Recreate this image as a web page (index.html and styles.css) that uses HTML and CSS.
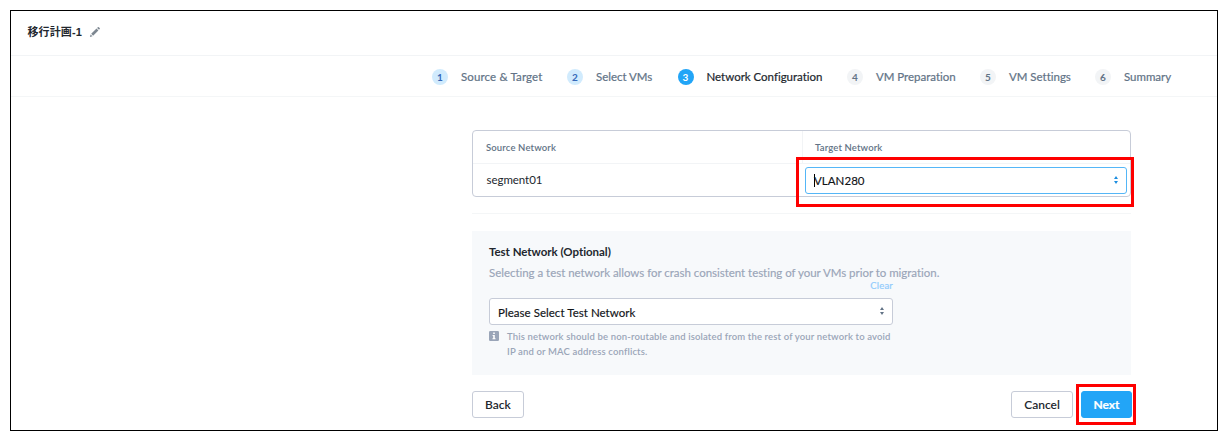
FILE: index.html
```html
<!DOCTYPE html>
<html lang="ja">
<head>
<meta charset="utf-8">
<title>Network Configuration</title>
<link rel="stylesheet" href="styles.css">
</head>
<body>
<div class="window">
  <header class="titlebar">
    <h1 class="plan-name">移行計画-1</h1>
    <svg class="pencil" viewBox="0 0 12 12" width="12" height="12"><path d="M.9 11l.7-2.6 1.900 1.900zM2.200 7.800l5.300-5.300 1.900 1.900-5.300 5.300zM8.100 1.900l.7-.7q.5-.5 1 0l.9.9q.5.500 0 1l-.7.7z"/></svg>
  </header>
  <nav class="steps">
    <div class="step done source-step"><i class="num">1</i><span>Source &amp; Target</span></div>
    <div class="step done"><i class="num">2</i><span>Select VMs</span></div>
    <div class="step current"><i class="num">3</i><span>Network Configuration</span></div>
    <div class="step"><i class="num">4</i><span>VM Preparation</span></div>
    <div class="step"><i class="num">5</i><span>VM Settings</span></div>
    <div class="step"><i class="num">6</i><span>Summary</span></div>
  </nav>
  <main class="content">
    <section class="mapping">
      <div class="cell head">Source Network</div>
      <div class="cell head target">Target Network</div>
      <div class="cell source">segment01</div>
      <div class="cell pick">
        <div class="select focused"><i class="caret"></i><span>VLAN280</span>
          <svg class="arrows" viewBox="0 0 4 8" width="4" height="8"><path d="M0 3l2-3 2 3zM0 5h4l-2 3z"/></svg></div>
        <div class="mark mark-select"></div>
      </div>
    </section>
    <hr class="rule">
    <section class="test-network">
      <h2 class="test-title">Test Network (Optional)</h2>
      <p class="test-desc">Selecting a test network allows for crash consistent testing of your VMs prior to migration.</p>
      <div class="field">
        <a class="clear">Clear</a>
        <div class="select"><span>Please Select Test Network</span>
          <svg class="arrows" viewBox="0 0 4 8" width="4" height="8"><path d="M0 3l2-3 2 3zM0 5h4l-2 3z"/></svg></div>
        <div class="hint">
          <svg class="info" viewBox="0 0 10 10" width="10" height="10"><rect width="10" height="10" rx="1.2"/><path d="M4.2 1.6h1.6v1.5H4.2zM3.6 4h2.2v3.2h.7v1.1h-3V7.200h.7V5.100h-.6z" fill="#fff"/></svg>
          <p>This network should be non-routable and isolated from the rest of your network to avoid<br>IP and or MAC address conflicts.</p>
        </div>
      </div>
    </section>
    <footer class="actions">
      <button class="btn back">Back</button>
      <button class="btn cancel">Cancel</button>
      <div class="next-wrap"><button class="btn next">Next</button><div class="mark mark-next"></div></div>
    </footer>
  </main>
</div>
</body>
</html>
```
FILE: styles.css
```css
* { box-sizing: border-box; }
body { margin: 0; background: #fff; font-family: Lato, "Noto Sans CJK JP", sans-serif; font-size: 11.5px; color: #22272e; height: 440px; overflow: hidden; }
.window { width: 1208px; height: 421px; margin: 10px 0 0 10px; border: 1px solid #000; }
.titlebar { height: 45px; display: flex; align-items: center; gap: 7px; padding: 0 0 2px 16.5px; border-bottom: 1px solid #f2f4f6; }
.plan-name { margin: 0; font: bold 11px/16px "Liberation Sans", "Noto Sans CJK JP", sans-serif; letter-spacing: .1px; }
.pencil { fill: #7d8791; }
.steps { height: 41px; display: grid; grid-template-columns: 135px 110.5px 169.5px 133px 115px 80px; padding: 1px 0 0 421px; border-bottom: 1px solid #f4f6f7; align-items: center; }
.step { display: flex; align-items: center; gap: 13px; color: #627386; white-space: nowrap; letter-spacing: -.02px; -webkit-text-stroke: .2px currentColor; }
.source-step { letter-spacing: .13px; }
.num { flex: none; width: 16px; height: 16px; border-radius: 50%; background: #f2f4f6; font: bold 10px/16px Lato, sans-serif; text-align: center; letter-spacing: 0; -webkit-text-stroke: 0; }
.done .num { background: #d1ebfd; color: #3568b8; }
.current { color: #22272e; }
.current .num { background: #22a5f7; color: #fff; }
.content { width: 659px; margin: 33px 0 0 461px; }
.mapping { height: 67px; display: grid; grid-template-columns: 329px 1fr; grid-template-rows: 33px 32px; border: 1px solid #c7ccd8; border-radius: 4px; }
.cell { display: flex; align-items: center; padding-left: 13px; }
.head { font-size: 9.5px; font-weight: 600; letter-spacing: .14px; color: #627386; border-bottom: 1px solid #f2f4f6; }
.target { border-left: 1px solid #f2f4f6; padding-left: 12px; }
.source { letter-spacing: -.05px; padding: 0 0 1px 13.5px; }
.pick { position: relative; padding: 0 3px 0 3px; }
.select { position: relative; display: flex; align-items: center; width: 100%; height: 27px; border: 1px solid #c7ccd8; border-radius: 3px; background: #fff; padding: 1px 8px 0; color: #111418; -webkit-text-stroke: .15px currentColor; letter-spacing: .04px; }
.arrows { margin: -2px 0 0 auto; fill: #627386; }
.focused { border-color: #54b6f7; padding-top: 0; }
.focused .arrows { fill: #1b8de0; margin-top: 0; }
.caret { width: 1px; height: 13px; background: #000; margin-right: -1px; }
.mark { position: absolute; border: 3px solid #fe0000; }
.mark-select { left: -6px; top: -7px; width: 338px; height: 50px; }
.rule { border: 0; height: 1px; background: #f4f6f7; margin: 16px 0 17px; }
.test-network { height: 144px; background: #f7f9fb; padding: 13px 17px; }
.test-title { margin: 0; font-size: 11.5px; line-height: 16px; font-weight: 700; letter-spacing: -.03px; }
.test-desc { margin: 5px 0 0; font-size: 11.5px; line-height: 16px; color: #9aa5b8; letter-spacing: -.03px; -webkit-text-stroke: .15px currentColor; }
.field { width: 404px; }
.clear { display: block; text-align: right; font-size: 9.5px; line-height: 10px; letter-spacing: .2px; color: #91cbfb; -webkit-text-stroke: .2px currentColor; }
.field .select { margin-top: 7px; }
.hint { display: flex; gap: 8px; color: #9aa5b8; font-size: 9.5px; line-height: 15px; font-weight: 600; letter-spacing: .15px; white-space: nowrap; }
.hint p { margin: 4px 0 0; }
.info { margin-top: 6px; fill: #9aa5b8; }
.actions { display: flex; width: 660px; margin-top: 16px; }
.btn { height: 27px; padding: 0; border: 1px solid #c7ccd8; border-radius: 3px; background: #fff; font: 600 12px Lato, sans-serif; color: #22272e; }
.back { width: 52px; }
.cancel { width: 62px; margin-left: auto; }
.next-wrap { position: relative; margin-left: 8px; }
.next { width: 51px; background: #22a5f7; border-color: #22a5f7; color: #fff; font-weight: 700; -webkit-text-stroke: .2px #fff; }
.mark-next { left: -5px; top: -7px; width: 60px; height: 41px; }
```
